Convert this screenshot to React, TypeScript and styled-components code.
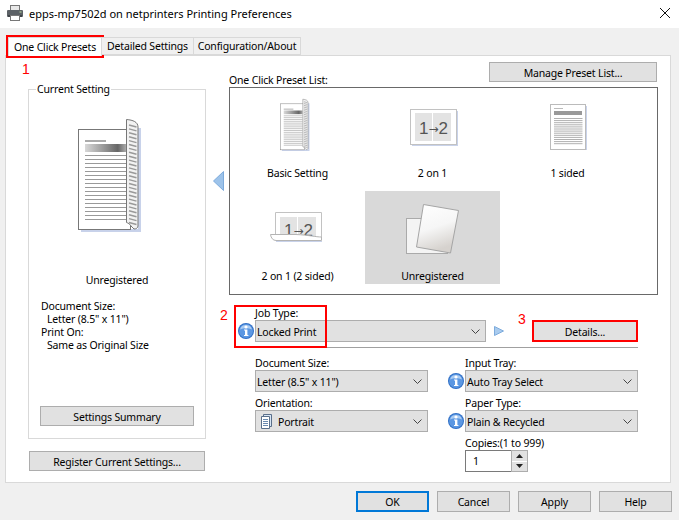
import React, {FunctionComponent} from "react";
import styled, {createGlobalStyle} from "styled-components";

const Global = createGlobalStyle`
  html, body {
    margin: 0;
    padding: 0;
    background: #f0f0f0;
  }
  body {
    font-family: "Noto Sans", "Open Sans", "Liberation Sans", sans-serif;
    font-size: 10.5px;
    letter-spacing: -0.17px;
    color: #000;
  }
  * {
    box-sizing: border-box;
  }
`;

const Dialog = styled.div`
  width: 679px;
  height: 520px;
  display: flex;
  flex-direction: column;
  overflow: hidden;
`;

const TitleBar = styled.div`
  height: 28px;
  background: #fff;
  display: flex;
  align-items: center;
  padding: 0 9px 2px 7px;
  font-size: 11px;
  letter-spacing: 0;
`;

const TitleText = styled.span`
  margin-left: 6px;
  flex: 1;
`;

const TabStrip = styled.div`
  height: 27px;
  padding: 9px 0 0 8px;
  display: flex;
  align-items: flex-end;
`;

const Tab = styled.div<{$active?: boolean; $width: number}>`
  position: relative;
  z-index: 1;
  width: ${p => p.$width}px;
  height: ${p => (p.$active ? 19 : 18)}px;
  margin-bottom: ${p => (p.$active ? -1 : 0)}px;
  background: ${p => (p.$active ? "#fff" : "#f0f0f0")};
  border: 1px solid #d9d9d9;
  border-left-width: ${p => (p.$active ? 1 : 0)}px;
  border-bottom-width: ${p => (p.$active ? 0 : 1)}px;
  outline: ${p => (p.$active ? "2px solid #f00" : "none")};
  display: flex;
  align-items: center;
  justify-content: center;
  line-height: 14px;
  white-space: nowrap;
`;

const Marker = styled.span<{$left: number; $top: number}>`
  position: absolute;
  left: ${p => p.$left}px;
  top: ${p => p.$top}px;
  color: #f00;
  font-family: "Liberation Sans", sans-serif;
  font-size: 14px;
  line-height: 14px;
`;

const Panel = styled.div`
  margin-left: 5px;
  width: 666px;
  height: 428px;
  background: #fff;
  border: 1px solid #d9d9d9;
  padding: 6px 13px 0 22px;
  display: grid;
  grid-template-columns: 178px 23px 429px;
  position: relative;
`;

const LeftColumn = styled.div`
  padding-top: 20px;
  display: flex;
  flex-direction: column;
`;

const Group = styled.fieldset`
  margin: 0;
  padding: 0 11px 12px;
  height: 357px;
  border: 1px solid #d9d9d9;
  display: flex;
  flex-direction: column;
  align-items: center;
`;

const GroupTitle = styled.legend`
  margin-left: -4px;
  padding: 0 1px;
  line-height: 14px;
`;

const CurrentIcon = styled.svg`
  display: block;
  margin: 23px 14px 0 0;
`;

const Caption = styled.div`
  margin-top: 40px;
  line-height: 14px;
`;

const Summary = styled.div`
  margin-top: 13px;
  align-self: stretch;
  line-height: 13px;
  padding-left: 1px;
`;

const SummaryValue = styled.div`
  padding-left: 6px;
`;

const Button = styled.div<{$width?: number; $height?: number}>`
  width: ${p => (p.$width ? `${p.$width}px` : "100%")};
  height: ${p => p.$height || 20}px;
  flex-shrink: 0;
  background: #e1e1e1;
  border: 1px solid #adadad;
  padding-top: 1px;
  display: flex;
  align-items: center;
  justify-content: center;
`;

const SummaryButton = styled(Button)`
  margin-top: 54px;
`;

const RegisterButton = styled(Button)`
  margin-top: 12px;
  margin-left: 1px;
`;

const BackColumn = styled.div`
  padding: 109px 0 0 7px;
`;

const RightColumn = styled.div`
  display: flex;
  flex-direction: column;
`;

const ListHeader = styled.div`
  display: flex;
  justify-content: space-between;
  align-items: flex-start;
  height: 25px;
  padding-right: 1px;
`;

const ListTitle = styled.span`
  line-height: 14px;
  margin-top: 11px;
`;

const PresetList = styled.div`
  width: 429px;
  height: 208px;
  border: 1px solid #696969;
  display: grid;
  grid-template-columns: repeat(3, 135px);
  grid-template-rows: 103px 93px;
`;

const Preset = styled.div<{$selected?: boolean}>`
  background: ${p => (p.$selected ? "#d9d9d9" : "transparent")};
  display: flex;
  flex-direction: column;
  align-items: center;
  line-height: 14px;
`;

const PresetIcon = styled.svg`
  display: block;
  flex-shrink: 0;
`;

const Settings = styled.div`
  margin-top: 11px;
  margin-left: 9px;
  position: relative;
`;

const JobRow = styled.div`
  position: relative;
  display: flex;
  align-items: center;
  margin-left: 0;
`;

const Highlight = styled.div`
  position: absolute;
  left: -4px;
  top: -15px;
  width: 93px;
  height: 43px;
  border: 2px solid #f00;
  pointer-events: none;
`;

const Label = styled.div`
  padding-left: 17px;
  height: 14px;
  line-height: 14px;
  white-space: nowrap;
`;

const ControlRow = styled.div`
  display: flex;
  align-items: center;
  gap: 1px;
`;

const Slot = styled.div`
  width: 16px;
  height: 16px;
  flex-shrink: 0;
`;

const Select = styled.div<{$width: number}>`
  width: ${p => p.$width}px;
  height: 22px;
  background: #e1e1e1;
  border: 1px solid #adadad;
  display: flex;
  align-items: center;
  padding: 1px 5px 0 1px;
  gap: 5px;
`;

const SelectText = styled.span`
  flex: 1;
  white-space: nowrap;
`;

const PlayIcon = styled.span`
  margin-left: 8px;
  display: block;
  height: 10px;
  line-height: 0;
`;

const DetailsButton = styled(Button)`
  margin-left: 28px;
  border: 2px solid #f00;
`;

const Divider = styled.div`
  margin: 5px 0 8px 17px;
  width: 383px;
  height: 1px;
  background: #a0a0a0;
`;

const Columns = styled.div`
  display: flex;
  gap: 20px;
`;

const Column = styled.div`
  width: 190px;
  display: flex;
  flex-direction: column;
`;

const Field = styled.div`
  margin-bottom: 4px;
`;

const Copies = styled.div`
  margin-left: 17px;
  width: 63px;
  height: 22px;
  display: flex;
`;

const CopiesInput = styled.div`
  flex: 1;
  border: 1px solid #7a7a7a;
  border-right: 0;
  padding-left: 7px;
  line-height: 20px;
`;

const Spin = styled.div`
  width: 17px;
  border: 1px solid #adadad;
  display: flex;
  flex-direction: column;
  gap: 1px;
  background: #fff;
`;

const SpinPart = styled.div`
  flex: 1;
  background: #e1e1e1;
  display: flex;
  align-items: center;
  justify-content: center;
`;

const Footer = styled.div`
  display: flex;
  justify-content: flex-end;
  gap: 8px;
  padding: 8px 7px 0 0;
`;

const FooterButton = styled(Button)<{$default?: boolean}>`
  border: ${p => (p.$default ? "2px solid #0078d7" : "1px solid #adadad")};
`;

const PrinterIcon = () => (
    <svg width="16" height="16" viewBox="0 0 16 16">
        <rect x="3.5" y="0.5" width="9" height="5" fill="#e8e8e8" stroke="#777"/>
        <rect x="0" y="5" width="16" height="7" rx="1" fill="#5c6166"/>
        <rect x="1" y="10" width="14" height="2" fill="#3f4347"/>
        <rect x="12.5" y="6.5" width="2" height="1" fill="#b8e0a0"/>
        <rect x="3.5" y="10.5" width="9" height="5" fill="#fff" stroke="#777"/>
    </svg>
);

const CloseIcon = () => (
    <svg width="10" height="10" viewBox="0 0 10 10">
        <path d="M0 0L10 10M10 0L0 10" stroke="#111" strokeWidth="1" fill="none"/>
    </svg>
);

const InfoIcon = () => (
    <svg width="16" height="16" viewBox="0 0 16 16">
        <circle cx="8" cy="8" r="8" fill="#2f6fc6"/>
        <circle cx="8" cy="8" r="7" fill="#5b97e2"/>
        <path d="M2 6.5A6.2 6 0 0 1 14 6.5A9 4 0 0 0 2 6.5Z" fill="#a9cbf2"/>
        <circle cx="8" cy="4" r="1.6" fill="#fff"/>
        <path d="M6 6.6H9.4V12H10.4V13H6V12H7V7.6H6Z" fill="#fff"/>
    </svg>
);

const Chevron = () => (
    <svg width="9" height="5" viewBox="0 0 9 5">
        <path d="M0.5 0.5L4.5 4.5L8.5 0.5" fill="none" stroke="#444" strokeWidth="1"/>
    </svg>
);

const PortraitIcon = styled.svg`
  margin-left: 3px;
  flex-shrink: 0;
`;

const DocumentIcon = () => (
    <PortraitIcon width="13" height="15" viewBox="0 0 13 15">
        <path d="M3.5 0.5H11.5V12.5H3.5Z" fill="#d8e6f5" stroke="#5a6f8a"/>
        <path d="M1.5 2.5H9.5V14.5H1.5Z" fill="#fff" stroke="#5a6f8a"/>
        <path d="M3 5.5H8M3 7.5H8M3 9.5H8M3 11.5H8" stroke="#6a8ab0"/>
    </PortraitIcon>
);

const BackArrow = () => (
    <svg width="11" height="20" viewBox="0 0 11 20">
        <path d="M10.5 0.5V19.5L0.5 10Z" fill="#9dc3ea" stroke="#7dabdc"/>
    </svg>
);

const PlayArrow = () => (
    <svg width="10" height="10" viewBox="0 0 10 10">
        <path d="M0.5 0.5L9.5 5L0.5 9.5Z" fill="#a9cbee" stroke="#7dabdc"/>
    </svg>
);

const SpinArrow: FunctionComponent<{up?: boolean}> = ({up}) => (
    <svg width="7" height="4" viewBox="0 0 7 4">
        <path d={up ? "M0 4H7L3.5 0Z" : "M0 0H7L3.5 4Z"} fill="#222"/>
    </svg>
);

const spineMarks = Array.from({length: 26}, (_, i) => 125 + i * 3.9);
const bookLines = Array.from({length: 17}, (_, i) => 155.5 + i * 4);

// drawn in the coordinates of the large icon, the small one is a scaled copy
const Book: FunctionComponent<{barId: string}> = ({barId}) => (
    <g transform="translate(-78 -119)">
        <defs>
            <linearGradient id={barId}>
                <stop offset="0" stopColor="#d8d8d8"/>
                <stop offset="0.45" stopColor="#999"/>
                <stop offset="0.8" stopColor="#666"/>
                <stop offset="1" stopColor="#aaa"/>
            </linearGradient>
        </defs>
        <path d="M81 229H138V128H141V232H81Z" fill="#c8d2ea"/>
        <rect x="78.5" y="129.5" width="52" height="100" fill="#fff" stroke="#777"/>
        <rect x="85" y="140" width="21" height="2" fill="#aaa"/>
        <rect x="85" y="144" width="41" height="8" fill={`url(#${barId})`}/>
        {bookLines.map(y => <path key={y} d={`M85 ${y}H126`} stroke="#999" strokeWidth="1.2"/>)}
        <path d="M126.5 119.5C133 120 138 122 138 127V226C138 228 136 229 134 229L131 226C130 224 128 223 126.5 222.5Z"
              fill="#f2f2f2" stroke="#777"/>
        {spineMarks.map(y => <path key={y} d={`M129 ${y}L136.5 ${y + 2}`} stroke="#999" strokeWidth="1.4"/>)}
    </g>
);

const sidedLines = Array.from({length: 13}, (_, i) => 30.5 + i * 2.1);

const TwoOnOneText: FunctionComponent<{y: number}> = ({y}) => (
    <text x="40.5" y={y} textAnchor="middle" fill="#555" fontFamily="Liberation Sans, sans-serif" fontSize="17" letterSpacing="0">
        1<tspan fontFamily="DejaVu Sans, sans-serif" fontSize="12" dy="-1">→</tspan><tspan dy="1">2</tspan>
    </text>
);

const BasicIcon = () => (
    <PresetIcon width="80" height="78" viewBox="0 0 80 78">
        <g transform="translate(22.5 11) scale(0.46)">
            <Book barId="basicBar"/>
        </g>
    </PresetIcon>
);

const TwoOnOneIcon = () => (
    <PresetIcon width="80" height="78" viewBox="0 0 80 78">
        <path d="M19 23H65V58H19Z" fill="#c8d2ea"/>
        <rect x="17.5" y="21.5" width="46" height="35" fill="#fff" stroke="#c2c2c2"/>
        <rect x="22" y="25" width="17" height="28" fill="#e3e3e3"/>
        <rect x="40" y="25" width="18" height="28" fill="#e3e3e3"/>
        <TwoOnOneText y="46"/>
    </PresetIcon>
);

const OneSidedIcon = () => (
    <PresetIcon width="80" height="78" viewBox="0 0 80 78">
        <path d="M24 18H59V62H24Z" fill="#c8d2ea"/>
        <rect x="22.5" y="16.5" width="35" height="45" fill="#fff" stroke="#bbb"/>
        <rect x="26" y="20" width="9" height="1" fill="#bbb"/>
        <rect x="26" y="23" width="28" height="4" fill="#999"/>
        {sidedLines.map(y => <path key={y} d={`M26 ${y}H54.5`} stroke="#b0b0b0"/>)}
    </PresetIcon>
);

const TwoSidedIcon = () => (
    <PresetIcon width="80" height="78" viewBox="0 0 80 78">
        <path d="M17.5 43V21.5H63.5V46" fill="#fff" stroke="#c2c2c2"/>
        <rect x="22" y="26" width="17" height="20" fill="#e3e3e3"/>
        <rect x="40" y="26" width="18" height="20" fill="#e3e3e3"/>
        <TwoOnOneText y="45"/>
        <path d="M12.5 43.5H38C50 44 58 46 63.5 46V49.5H18C15 49.5 13 47 12.5 43.5Z" fill="#fff" stroke="#b4b4b4"/>
        <path d="M18 50.5H64" stroke="#c8d2ea"/>
    </PresetIcon>
);

const UnregisteredIcon = () => (
    <PresetIcon width="80" height="78" viewBox="0 0 80 78">
        <defs>
            <linearGradient id="sheet" x1="0" y1="0" x2="0.3" y2="1">
                <stop offset="0" stopColor="#fff"/>
                <stop offset="0.55" stopColor="#f6f6f6"/>
                <stop offset="1" stopColor="#d6d2ce"/>
            </linearGradient>
        </defs>
        <rect x="13.5" y="27.5" width="41" height="35" fill="#f4f4f4" stroke="#aaa"/>
        <path d="M30.5 13.5L65.5 19.5L57.5 62L23.5 56Z" fill="url(#sheet)" stroke="#a5a5a5"/>
    </PresetIcon>
);

const presets = [
    {name: "Basic Setting", icon: <BasicIcon/>},
    {name: "2 on 1", icon: <TwoOnOneIcon/>},
    {name: "1 sided", icon: <OneSidedIcon/>},
    {name: "2 on 1 (2 sided)", icon: <TwoSidedIcon/>},
    {name: "Unregistered", icon: <UnregisteredIcon/>, selected: true},
];

const App: FunctionComponent<{}> = () => {
    return (
        <Dialog>
            <Global/>
            <TitleBar>
                <PrinterIcon/>
                <TitleText>epps-mp7502d on netprinters Printing Preferences</TitleText>
                <CloseIcon/>
            </TitleBar>

            <TabStrip>
                <Tab $active $width={94}>
                    One Click Presets
                    <Marker $left={13} $top={24}>1</Marker>
                </Tab>
                <Tab $width={92}>Detailed Settings</Tab>
                <Tab $width={107}>Configuration/About</Tab>
            </TabStrip>

            <Panel>
                <LeftColumn>
                    <Group>
                        <GroupTitle>Current Setting</GroupTitle>
                        <CurrentIcon width="64" height="114" viewBox="0 0 64 114">
                            <Book barId="currentBar"/>
                        </CurrentIcon>
                        <Caption>Unregistered</Caption>
                        <Summary>
                            <div>Document Size:</div>
                            <SummaryValue>Letter (8.5" x 11")</SummaryValue>
                            <div>Print On:</div>
                            <SummaryValue>Same as Original Size</SummaryValue>
                        </Summary>
                        <SummaryButton>Settings Summary</SummaryButton>
                    </Group>
                    <RegisterButton $width={176}>Register Current Settings...</RegisterButton>
                </LeftColumn>

                <BackColumn>
                    <BackArrow/>
                </BackColumn>

                <RightColumn>
                    <ListHeader>
                        <ListTitle>One Click Preset List:</ListTitle>
                        <Button $width={168}>Manage Preset List...</Button>
                    </ListHeader>
                    <PresetList>
                        {presets.map(preset => {
                            return (
                                <Preset key={preset.name} $selected={preset.selected}>
                                    {preset.icon}
                                    {preset.name}
                                </Preset>
                            )
                        })}
                    </PresetList>

                    <Settings>
                        <Label>Job Type:</Label>
                        <JobRow>
                            <Highlight/>
                            <Marker $left={-18} $top={-12}>2</Marker>
                            <ControlRow>
                                <InfoIcon/>
                                <Select $width={231}>
                                    <SelectText>Locked Print</SelectText>
                                    <Chevron/>
                                </Select>
                            </ControlRow>
                            <PlayIcon><PlayArrow/></PlayIcon>
                            <DetailsButton $width={106} $height={22}>Details...</DetailsButton>
                            <Marker $left={280} $top={-8}>3</Marker>
                        </JobRow>
                        <Divider/>
                        <Columns>
                            <Column>
                                <Field>
                                    <Label>Document Size:</Label>
                                    <ControlRow>
                                        <Slot/>
                                        <Select $width={173}>
                                            <SelectText>Letter (8.5" x 11")</SelectText>
                                            <Chevron/>
                                        </Select>
                                    </ControlRow>
                                </Field>
                                <Field>
                                    <Label>Orientation:</Label>
                                    <ControlRow>
                                        <Slot/>
                                        <Select $width={173}>
                                            <DocumentIcon/>
                                            <SelectText>Portrait</SelectText>
                                            <Chevron/>
                                        </Select>
                                    </ControlRow>
                                </Field>
                            </Column>
                            <Column>
                                <Field>
                                    <Label>Input Tray:</Label>
                                    <ControlRow>
                                        <InfoIcon/>
                                        <Select $width={173}>
                                            <SelectText>Auto Tray Select</SelectText>
                                            <Chevron/>
                                        </Select>
                                    </ControlRow>
                                </Field>
                                <Field>
                                    <Label>Paper Type:</Label>
                                    <ControlRow>
                                        <InfoIcon/>
                                        <Select $width={173}>
                                            <SelectText>Plain &amp; Recycled</SelectText>
                                            <Chevron/>
                                        </Select>
                                    </ControlRow>
                                </Field>
                                <Label>Copies:(1 to 999)</Label>
                                <Copies>
                                    <CopiesInput>1</CopiesInput>
                                    <Spin>
                                        <SpinPart><SpinArrow up/></SpinPart>
                                        <SpinPart><SpinArrow/></SpinPart>
                                    </Spin>
                                </Copies>
                            </Column>
                        </Columns>
                    </Settings>
                </RightColumn>
            </Panel>

            <Footer>
                <FooterButton $default $width={73} $height={21}>OK</FooterButton>
                <FooterButton $width={73} $height={21}>Cancel</FooterButton>
                <FooterButton $width={73} $height={21}>Apply</FooterButton>
                <FooterButton $width={73} $height={21}>Help</FooterButton>
            </Footer>
        </Dialog>
    )
}

export default App;
